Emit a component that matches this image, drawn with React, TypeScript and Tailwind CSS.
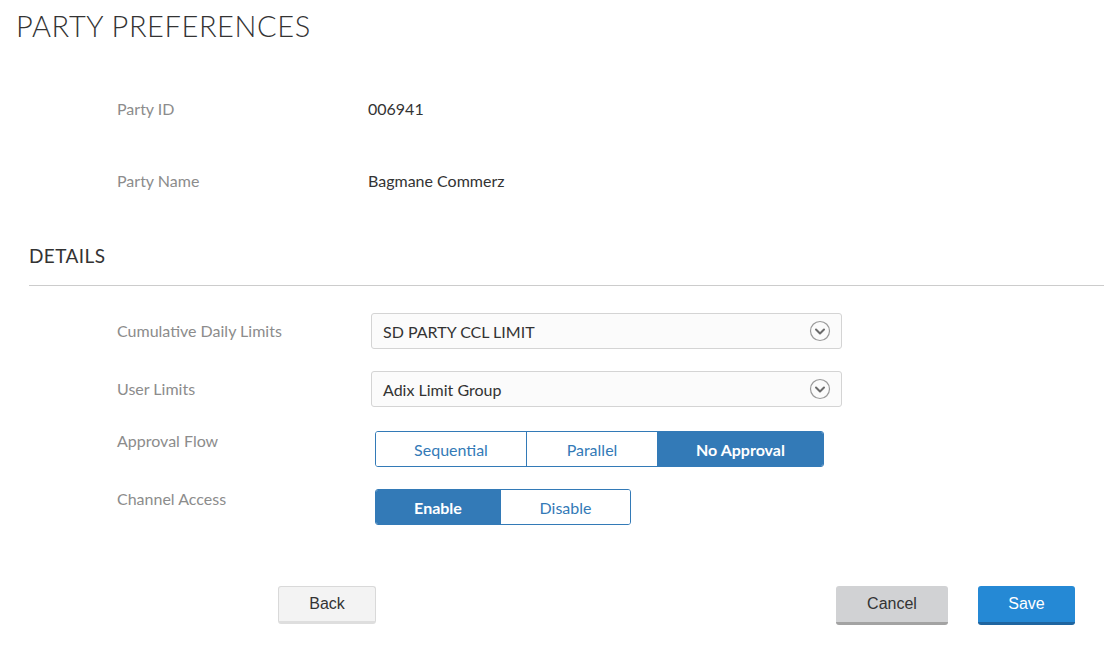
import React, { useState } from 'react'

function Chevron() {
  return (
    <svg width="22" height="22" viewBox="0 0 22 22" className="shrink-0">
      <circle cx="11" cy="11" r="9.5" fill="none" stroke="#9a9a9a" strokeWidth="1.2" />
      <path d="M7 9.5 L11 13.5 L15 9.5" fill="none" stroke="#6b6b6b" strokeWidth="2" strokeLinecap="round" strokeLinejoin="round" />
    </svg>
  )
}

function Select({ value }: { value: string }) {
  return (
    <div className="w-[471px] h-9 flex items-center justify-between pl-[11px] pr-[10px] bg-[#fbfbfb] border border-[#d4d4d4] rounded-[3px] text-[16px] text-[#333]">
      <span className="pt-px">{value}</span>
      <Chevron />
    </div>
  )
}

function Toggle({ options, active, widths }: { options: string[]; active: number; widths: string[] }) {
  return (
    <div className="flex h-9 border border-[#337ab7] rounded-[3px] overflow-hidden">
      {options.map((o, i) => (
        <div
          key={o}
          className={
            'flex items-center justify-center pt-px text-[16px] ' +
            widths[i] +
            (i > 0 ? ' border-l border-[#337ab7]' : '') +
            (i === active ? ' bg-[#337ab7] text-white font-bold' : ' bg-white text-[#337ab7]')
          }
        >
          {o}
        </div>
      ))}
    </div>
  )
}

export default function App() {
  const [flow] = useState(2)
  const [access] = useState(0)

  return (
    <div className="w-[1104px] h-[650px] bg-white font-['Lato','Noto_Sans',sans-serif] overflow-hidden">
      <h1 className="pl-4 pt-[8px] text-[29px] leading-[36px] font-light tracking-[0.6px] text-[#333]">PARTY PREFERENCES</h1>

      <div className="mt-[54px] pl-[117px]">
        <div className="flex items-center h-[22px] text-[16px]">
          <span className="w-[251px] text-[#8c8c8c]">Party ID</span>
          <span className="text-[#333]">006941</span>
        </div>
        <div className="flex items-center h-[22px] mt-[50px] text-[16px]">
          <span className="w-[251px] text-[#8c8c8c]">Party Name</span>
          <span className="text-[#333]">Bagmane Commerz</span>
        </div>
      </div>

      <div className="ml-[29px] mt-[52px]">
        <h2 className="text-[19px] leading-[24px] text-[#333] tracking-[0.4px]">DETAILS</h2>
        <div className="mt-[17px] h-px bg-[#cccccc]" />
      </div>

      <div className="pl-[117px] mt-[27px] flex flex-col">
        <div className="flex items-center">
          <span className="w-[254px] text-[16px] text-[#8c8c8c]">Cumulative Daily Limits</span>
          <Select value="SD PARTY CCL LIMIT" />
        </div>
        <div className="flex items-center mt-[22px]">
          <span className="w-[254px] text-[16px] text-[#8c8c8c]">User Limits</span>
          <Select value="Adix Limit Group" />
        </div>
        <div className="flex items-start mt-[24px]">
          <span className="w-[258px] text-[16px] text-[#8c8c8c] leading-[20px]">Approval Flow</span>
          <Toggle options={['Sequential', 'Parallel', 'No Approval']} active={flow} widths={['w-[150px]', 'w-[131px]', 'w-[166px]']} />
        </div>
        <div className="flex items-start mt-[22px]">
          <span className="w-[258px] text-[16px] text-[#8c8c8c] leading-[20px]">Channel Access</span>
          <Toggle options={['Enable', 'Disable']} active={access} widths={['w-[124px]', 'w-[130px]']} />
        </div>
      </div>

      <div className="flex mt-[61px] font-['Liberation_Sans',Arial,sans-serif] text-[16px]">
        <button className="ml-[278px] w-[98px] h-[38px] bg-[#f3f3f3] border border-[#d9d9d9] border-b-[3px] border-b-[#dedede] rounded-[3px] text-[#333]">
          Back
        </button>
        <button className="ml-auto w-[112px] h-[39px] bg-[#d1d2d4] border-b-[3px] border-[#a3a3a3] rounded-[3px] text-[#333]">
          Cancel
        </button>
        <button className="ml-[30px] mr-[29px] w-[97px] h-[39px] bg-[#2589d5] border-b-[3px] border-[#1f65a0] rounded-[3px] text-white">
          Save
        </button>
      </div>
    </div>
  )
}
